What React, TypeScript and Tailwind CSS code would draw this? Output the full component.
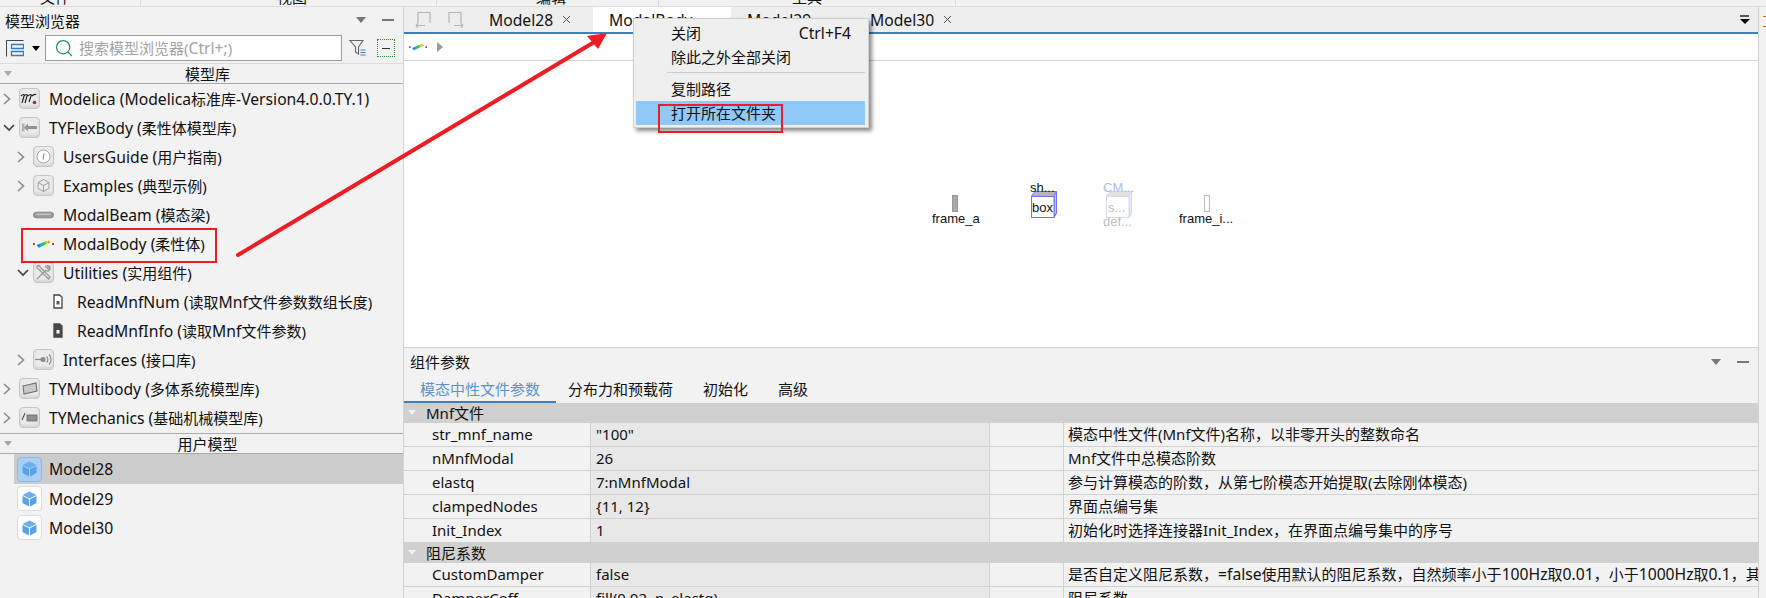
import type { ReactNode } from 'react'
import { Search } from 'lucide-react'

// latin text runs a little wider than the CJK next to it in the reference
function L({ children }: { children: ReactNode }) {
  return <span className="text-[15.7px]">{children}</span>
}

function Chevron({ open }: { open?: boolean }) {
  if (open) {
    return (
      <svg width="12" height="8" viewBox="0 0 12 8" fill="none" stroke="#444" strokeWidth="1.7">
        <path d="M1 1l5 5 5-5" />
      </svg>
    )
  }
  return (
    <svg width="8" height="12" viewBox="0 0 8 12" fill="none" stroke="#8a8a8a" strokeWidth="1.6">
      <path d="M1 1l5.5 5L1 11" />
    </svg>
  )
}

function IconBox({ children }: { children: ReactNode }) {
  return (
    <div className="w-[21px] h-[21px] rounded-[4px] border border-[#c6c6c6] bg-[#ebebeb] flex items-center justify-center shadow-[inset_0_-2px_3px_#d4d4d4]">
      {children}
    </div>
  )
}

function ModelicaIcon() {
  return (
    <IconBox>
      <svg width="19" height="15" viewBox="0 0 19 15" fill="none" stroke="#222" strokeWidth="1.2">
        <path d="M1 5c2-2 4-2 3 0l-2 7M4 5c2-2 4-2 3 0l-2 7M8 5c2-2 4-2 3 0l-2 6M12 5c2-2 4-2 4-1" />
        <circle cx="14.5" cy="11.5" r="1.8" fill="#d01c24" stroke="none" />
      </svg>
    </IconBox>
  )
}

function FlexIcon() {
  return (
    <IconBox>
      <svg width="17" height="13" viewBox="0 0 17 13" fill="#939393">
        <path d="M3 6.500L7 2.500v2.500h9v3H7v2.500z" />
        <rect x="1" y="2.500" width="2.500" height="8" fill="#b0b0b0" />
      </svg>
    </IconBox>
  )
}

function GuideIcon() {
  return (
    <IconBox>
      <svg width="15" height="15" viewBox="0 0 15 15" fill="#fff" stroke="#a6a6a6" strokeWidth="1">
        <circle cx="7.500" cy="7.500" r="6.500" />
        <path d="M8 4.500L7 10.500" stroke="#8d8d8d" strokeWidth="1.200" />
      </svg>
    </IconBox>
  )
}

function ExamplesIcon() {
  return (
    <IconBox>
      <svg width="15" height="15" viewBox="0 0 15 15" fill="none" stroke="#9d9d9d" strokeWidth="1">
        <path d="M7.500 1.500l5.500 3v6l-5.500 3-5.500-3v-6zM2 4.500l5.500 3 5.500-3M7.500 7.500v6" />
      </svg>
    </IconBox>
  )
}

function BeamIcon() {
  return (
    <svg width="22" height="8" viewBox="0 0 22 8">
      <rect x="0.5" y="1" width="21" height="6" rx="3" fill="#9b9b9b" stroke="#777" strokeWidth="0.8" />
      <rect x="3" y="2.500" width="16" height="1.500" fill="#c4c4c4" />
    </svg>
  )
}

function RainbowBar({ width = 22, id }: { width?: number; id: string }) {
  return (
    <svg width={width} height={(width * 10) / 22} viewBox="0 0 22 10">
      <defs>
        <linearGradient id={id} x1="0" x2="1" y1="0" y2="0">
          <stop offset="0" stopColor="#2040e0" />
          <stop offset="0.3" stopColor="#10b8d0" />
          <stop offset="0.55" stopColor="#30d030" />
          <stop offset="0.8" stopColor="#e8e020" />
          <stop offset="1" stopColor="#e03020" />
        </linearGradient>
      </defs>
      <rect x="0" y="4" width="2" height="2" fill="#555" />
      <rect x="20" y="4" width="2" height="2" fill="#555" />
      <path d="M4 6L16 1l2 2.500L6 9z" fill={`url(#${id})`} />
    </svg>
  )
}

function ToolsIcon() {
  return (
    <IconBox>
      <svg width="17" height="17" viewBox="0 0 17 17" fill="none" stroke="#9a9a9a" strokeWidth="1.300">
        <path d="M2 15L11 6M10 3.500a3 3 0 0 1 4-1.500l-2 2 1 1 2-2a3 3 0 0 1-4.500 3.500" />
        <path d="M2 2l2-.5 1.500 2L15 13l-1.500 2L4 5.500 2 4z" />
      </svg>
    </IconBox>
  )
}

function DocIcon({ filled }: { filled?: boolean }) {
  return (
    <svg width="10" height="15" viewBox="0 0 10 15">
      <path d="M1 1h5.500L9 3v11H1z" fill={filled ? '#4a4a4a' : '#fff'} stroke="#444" strokeWidth="1.300" />
      <rect x="3.500" y="7" width="3" height="3.500" fill={filled ? '#fff' : '#555'} />
    </svg>
  )
}

function InterfacesIcon() {
  return (
    <IconBox>
      <svg width="19" height="13" viewBox="0 0 19 13" fill="none" stroke="#8c8c8c" strokeWidth="1.200">
        <path d="M1 6.500h6" />
        <circle cx="9" cy="6.500" r="2" fill="#8c8c8c" />
        <path d="M12.500 3.500a4 4 0 0 1 0 6M15 1.500a7 7 0 0 1 0 10" />
      </svg>
    </IconBox>
  )
}

function MultibodyIcon() {
  return (
    <IconBox>
      <svg width="17" height="15" viewBox="0 0 17 15">
        <path d="M2 5l13-3 1 8-13 3z" fill="#c9c9c9" stroke="#707070" strokeWidth="1.100" />
      </svg>
    </IconBox>
  )
}

function MechanicsIcon() {
  return (
    <IconBox>
      <svg width="18" height="13" viewBox="0 0 18 13">
        <path d="M1 9L4 2" stroke="#555" strokeWidth="1.200" />
        <rect x="6" y="4" width="10" height="6" fill="#8f8f8f" stroke="#666" strokeWidth="0.800" />
      </svg>
    </IconBox>
  )
}

function CubeIcon({ selected }: { selected?: boolean }) {
  return (
    <div
      className={
        selected
          ? 'w-[25px] h-[25px] rounded-[4px] border border-[#8dbce8] bg-[#a8d0f4] flex items-center justify-center'
          : 'w-[25px] h-[25px] rounded-[4px] border border-[#dcdcdc] bg-white flex items-center justify-center'
      }
    >
      <svg width="15" height="16" viewBox="0 0 15 16">
        <path d="M7.500 0.500L14.500 4 7.500 7.500 0.500 4z" fill="#6aaef0" />
        <path d="M0.500 5l6.500 3.300v7.200L0.500 12z" fill="#5b9fe4" />
        <path d="M14.500 5L8 8.300v7.200l6.500-3.500z" fill="#5b9fe4" />
      </svg>
    </div>
  )
}

function TreeRow({
  depth,
  arrow,
  icon,
  children
}: {
  depth: number
  arrow?: 'open' | 'closed'
  icon: ReactNode
  children: ReactNode
}) {
  const pad = depth === 0 ? 'pl-[3px]' : depth === 1 ? 'pl-[17px]' : 'pl-[31px]'
  return (
    <div className={'h-[29px] flex items-center whitespace-nowrap overflow-hidden ' + pad}>
      <div className="w-[16px] flex items-center">
        {arrow === 'open' && <Chevron open />}
        {arrow === 'closed' && <Chevron />}
      </div>
      <div className="w-[21px] flex items-center justify-center shrink-0">{icon}</div>
      <span className="ml-[9px]">{children}</span>
    </div>
  )
}

function SectionBar({ title }: { title: string }) {
  return (
    <div className="relative h-[20px] flex items-center justify-center border-b border-[#aaaaaa] pl-[12px]">
      <span className="absolute left-[4px] top-[7px] w-0 h-0 border-x-[4px] border-x-transparent border-t-[5px] border-t-[#a8a8a8]" />
      {title}
    </div>
  )
}

function ModelRow({ name, selected }: { name: string; selected?: boolean }) {
  return (
    <div className={selected ? 'ml-[14px] h-[30px] bg-[#cccccc] flex items-center' : 'ml-[14px] h-[29px] flex items-center'}>
      <div className="ml-[3px]">
        <CubeIcon selected={selected} />
      </div>
      <span className="ml-[7px]">
        <L>{name}</L>
      </span>
    </div>
  )
}

function ModelBrowser() {
  return (
    <aside className="w-[404px] shrink-0 border-r border-[#d4d4d4] bg-[#f2f2f2]">
      <div className="h-[26px] flex items-center pl-[5px] pr-[9px]">
        <span className="flex-1 pt-[1px]">模型浏览器</span>
        <span className="w-0 h-0 border-x-[5px] border-x-transparent border-t-[6px] border-t-[#777] mr-[16px]" />
        <span className="w-[12px] h-[2px] bg-[#777]" />
      </div>
      <div className="h-[30px] flex items-center pl-[6px]">
        <svg width="18" height="17" viewBox="0 0 18 17" fill="none">
          <path d="M.5 16.500V.5h17" stroke="#444" />
          <path d="M5.500 4.500h12v4h-12zM5.500 11.500h12v4h-12z" stroke="#2f7fc4" strokeWidth="1.300" />
        </svg>
        <span className="ml-[8px] w-0 h-0 border-x-[4.500px] border-x-transparent border-t-[5px] border-t-black" />
        <div className="ml-[5px] w-[297px] h-[26px] border border-[#9c9c9c] bg-white flex items-center pl-[8px]">
          <Search size={20} strokeWidth={1.500} className="text-[#1d9060] shrink-0" />
          <span className="ml-[5px] text-[#a3a3a3] whitespace-nowrap">
            搜索模型浏览器(<L>Ctrl+;</L>)
          </span>
        </div>
        <svg className="ml-[7px]" width="18" height="18" viewBox="0 0 18 18" fill="none" stroke="#666" strokeWidth="1.100">
          <path d="M1 1.500h13L9.500 8v7l-3-2V8z" />
          <path d="M11.500 11h5M11.500 13.500h5M11.500 16h5" stroke="#2f7fc4" />
        </svg>
        <div className="ml-[10px] w-[18px] h-[18px] border border-dotted border-[#2a8a3a] flex items-center justify-center">
          <span className="w-[8px] h-[1px] bg-[#333]" />
        </div>
      </div>
      <div className="border-t border-[#dcdcdc]">
        <SectionBar title="模型库" />
      </div>
      <TreeRow depth={0} arrow="closed" icon={<ModelicaIcon />}>
        <L>Modelica (Modelica</L>标准库<L>-Version4.0.0.TY.1)</L>
      </TreeRow>
      <TreeRow depth={0} arrow="open" icon={<FlexIcon />}>
        <L>TYFlexBody (</L>柔性体模型库)
      </TreeRow>
      <TreeRow depth={1} arrow="closed" icon={<GuideIcon />}>
        <L>UsersGuide (</L>用户指南)
      </TreeRow>
      <TreeRow depth={1} arrow="closed" icon={<ExamplesIcon />}>
        <L>Examples (</L>典型示例)
      </TreeRow>
      <TreeRow depth={1} icon={<BeamIcon />}>
        <L>ModalBeam (</L>模态梁)
      </TreeRow>
      <TreeRow depth={1} icon={<RainbowBar id="rb-tree" />}>
        <L>ModalBody (</L>柔性体)
      </TreeRow>
      <TreeRow depth={1} arrow="open" icon={<ToolsIcon />}>
        <L>Utilities (</L>实用组件)
      </TreeRow>
      <TreeRow depth={2} icon={<DocIcon />}>
        <L>ReadMnfNum (</L>读取<L>Mnf</L>文件参数数组长度)
      </TreeRow>
      <TreeRow depth={2} icon={<DocIcon filled />}>
        <L>ReadMnfInfo (</L>读取<L>Mnf</L>文件参数)
      </TreeRow>
      <TreeRow depth={1} arrow="closed" icon={<InterfacesIcon />}>
        <L>Interfaces (</L>接口库)
      </TreeRow>
      <TreeRow depth={0} arrow="closed" icon={<MultibodyIcon />}>
        <L>TYMultibody (</L>多体系统模型库)
      </TreeRow>
      <TreeRow depth={0} arrow="closed" icon={<MechanicsIcon />}>
        <L>TYMechanics (</L>基础机械模型库)
      </TreeRow>
      <div className="border-t border-[#aaaaaa] mt-[1px]">
        <SectionBar title="用户模型" />
      </div>
      <ModelRow name="Model28" selected />
      <ModelRow name="Model29" />
      <ModelRow name="Model30" />
    </aside>
  )
}

function Close() {
  return (
    <svg width="9" height="9" viewBox="0 0 9 9" stroke="#555" strokeWidth="1">
      <path d="M1 1l7 7M8 1L1 8" />
    </svg>
  )
}

function TabBar() {
  return (
    <div className="h-[27px] shrink-0 bg-[#eeeeee] border-b-[2px] border-[#3d80bd] flex items-stretch">
      <div className="w-[85px] flex items-center pl-[11px] gap-[15px]">
        <svg width="17" height="17" viewBox="0 0 17 17" fill="none" stroke="#b5b5b5" strokeWidth="1.200">
          <path d="M3 12V1.500h12V12M1 14.500h9M1 14.500l2-2M1 14.500l2 2" />
        </svg>
        <svg width="17" height="17" viewBox="0 0 17 17" fill="none" stroke="#b5b5b5" strokeWidth="1.200">
          <path d="M2 12V1.500h12V12M7 14.500h9M16 14.500l-2-2M16 14.500l-2 2" />
        </svg>
      </div>
      <div className="w-[104px] flex items-center gap-[9px]">
        <L>Model28</L>
        <Close />
      </div>
      <div className="w-[138px] bg-white flex items-center pl-[16px] -mb-[2px] border-b-[2px] border-[#3d80bd]">
        <L>ModalBody</L>
      </div>
      <div className="w-[139px] flex items-center pl-[16px]">
        <L>Model29</L>
      </div>
      <div className="flex-1 flex items-center gap-[9px]">
        <L>Model30</L>
        <Close />
      </div>
      <div className="w-[27px] flex flex-col items-center justify-center gap-[2px]">
        <span className="w-[9px] h-[2px] bg-[#555]" />
        <span className="w-0 h-0 border-x-[5px] border-x-transparent border-t-[5px] border-t-black" />
      </div>
    </div>
  )
}

function CanvasNode({ className, children }: { className: string; children: ReactNode }) {
  return <div className={'absolute whitespace-nowrap font-["Liberation_Sans",sans-serif] text-[13px] leading-[16px] ' + className}>{children}</div>
}

function DiagramCanvas() {
  return (
    <div className="relative flex-1 bg-white">
      <div className="absolute left-[548px] top-[134px] w-[6px] h-[17px] bg-[#aaaaaa] border border-[#999]" />
      <CanvasNode className="left-[528px] top-[150px]">frame_a</CanvasNode>

      <div className="absolute left-[627px] top-[130px] w-[26px] h-[27px]">
        <svg width="26" height="27" viewBox="0 0 26 27" className="absolute inset-0">
          <path d="M.5 5L4 .5h21.500V22L23 26.500H.5z" fill="#b5b5b5" stroke="#6f6ff0" />
          <path d="M23 5L25.500 .5V22L23 26.500z" fill="#c4c4ee" stroke="#6f6ff0" />
          <rect x=".5" y="5.500" width="22.500" height="21" fill="#fff" stroke="#6f6ff0" />
        </svg>
        <span className="absolute left-[1px] top-[9px] font-['Liberation_Sans',sans-serif] text-[13px] leading-[16px]">box</span>
      </div>
      <CanvasNode className="left-[626px] top-[119px]">sh...</CanvasNode>

      <div className="absolute left-[702px] top-[130px] w-[26px] h-[27px]">
        <svg width="26" height="27" viewBox="0 0 26 27" className="absolute inset-0">
          <path d="M.5 5L4 .5h21.500V22L23 26.500H.5z" fill="#e2e2e2" stroke="#d6d6f8" />
          <path d="M23 5L25.500 .5V22L23 26.500z" fill="#ebebfa" stroke="#d6d6f8" />
          <rect x=".5" y="5.500" width="22.500" height="21" fill="#fff" stroke="#d6d6f8" />
        </svg>
        <span className="absolute left-[2px] top-[9px] font-['Liberation_Sans',sans-serif] text-[13px] leading-[16px] text-[#bdbdbd]">s...</span>
      </div>
      <CanvasNode className="left-[699px] top-[119px] text-[#b4b4f5]">CM...</CanvasNode>
      <CanvasNode className="left-[699px] top-[153px] text-[#bdbdbd]">def...</CanvasNode>

      <div className="absolute left-[800px] top-[134px] w-[6px] h-[17px] bg-white border border-[#bbbbbb]" />
      <CanvasNode className="left-[775px] top-[150px]">frame_i...</CanvasNode>
    </div>
  )
}

function ParamSection({ title }: { title: string }) {
  return (
    <div className="relative h-[20px] bg-[#d0d0d0] flex items-center pl-[22px]">
      <span className="absolute left-[4px] top-[7px] w-0 h-0 border-x-[4px] border-x-transparent border-t-[5px] border-t-[#f2f2f2]" />
      {title}
    </div>
  )
}

function ParamRow({ name, value, desc }: { name: string; value: string; desc: ReactNode }) {
  return (
    <div className="h-[24px] grid grid-cols-[187px_398px_75px_1fr] border-b-[1.500px] border-[#d2d2d2] whitespace-nowrap">
      <div className="pl-[28px] border-r-[1.500px] border-[#d2d2d2] leading-[22px]">{name}</div>
      <div className="pl-[5px] bg-[#e8e8e8] leading-[22px]">{value}</div>
      <div className="border-x-[1.500px] border-[#d2d2d2]" />
      <div className="pl-[4px] overflow-hidden leading-[22px]">{desc}</div>
    </div>
  )
}

function ParamPanel() {
  return (
    <div className="h-[251px] shrink-0 border-t-[1.500px] border-[#d2d2d2] bg-[#f2f2f2] overflow-hidden">
      <div className="h-[28px] flex items-center pl-[6px] pr-[9px]">
        <span className="flex-1">组件参数</span>
        <span className="w-0 h-0 border-x-[5px] border-x-transparent border-t-[6px] border-t-[#777] mr-[16px]" />
        <span className="w-[12px] h-[2px] bg-[#777]" />
      </div>
      <div className="h-[27px] flex items-stretch">
        <div className="w-[152px] flex items-center justify-center text-[#5b94cc] border-b-[2px] border-[#3d80bd]">模态中性文件参数</div>
        <div className="ml-[12px] flex items-center border-b-[2px] border-transparent">分布力和预载荷</div>
        <div className="ml-[30px] flex items-center border-b-[2px] border-transparent">初始化</div>
        <div className="ml-[30px] flex items-center border-b-[2px] border-transparent">高级</div>
      </div>
      <ParamSection title="Mnf文件" />
      <ParamRow name="str_mnf_name" value={'"100"'} desc="模态中性文件(Mnf文件)名称，以非零开头的整数命名" />
      <ParamRow name="nMnfModal" value="26" desc="Mnf文件中总模态阶数" />
      <ParamRow name="elastq" value="7:nMnfModal" desc="参与计算模态的阶数，从第七阶模态开始提取(去除刚体模态)" />
      <ParamRow name="clampedNodes" value="{11, 12}" desc="界面点编号集" />
      <ParamRow name="Init_Index" value="1" desc="初始化时选择连接器Init_Index，在界面点编号集中的序号" />
      <ParamSection title="阻尼系数" />
      <ParamRow
        name="CustomDamper"
        value="false"
        desc={
          <>
            是否自定义阻尼系数，<L>=false</L>使用默认的阻尼系数，自然频率小于<L>100Hz</L>取<L>0.01</L>，小于<L>1000Hz</L>取<L>0.1</L>，其余取1
          </>
        }
      />
      <ParamRow name="DamperCoff" value="fill(0.02, n_elastq)" desc="阻尼系数" />
    </div>
  )
}

function ContextMenu() {
  return (
    <div className="absolute left-[633px] top-[18px] w-[236px] h-[110px] bg-[#efefef] border-[1.500px] border-[#d0d0d0] shadow-[3px_3px_4px_rgba(0,0,0,0.45)] pl-[2px] pr-[3px]">
      <div className="h-[27px] pl-[35px] flex items-center justify-between pr-[14px]">
        <span>关闭</span>
        <L>Ctrl+F4</L>
      </div>
      <div className="h-[21px] pl-[35px] flex items-center">除此之外全部关闭</div>
      <div className="ml-[31px] h-[1px] mt-[5px] bg-[#cdcdcd]" />
      <div className="h-[24px] mt-[4px] pl-[35px] flex items-center">复制路径</div>
      <div className="h-[24px] pl-[35px] flex items-center bg-[#90c8f6]">打开所在文件夹</div>
    </div>
  )
}

export default function App() {
  return (
    <div className="relative w-[1766px] h-[598px] overflow-hidden bg-[#f2f2f2] text-[15px] leading-[20px] text-[#111] font-['Noto_Sans','Noto_Sans_CJK_SC',sans-serif]">
      {/* cut off menu bar */}
      <div className="h-[7px] overflow-hidden border-b border-[#dcdcdc] flex">
        <span className="ml-[40px] w-[100px] -mt-[13px]">文件</span>
        <span className="w-[137px] border-l border-[#dcdcdc]" />
        <span className="w-[159px] -mt-[13px]">视图</span>
        <span className="w-[100px] border-l border-[#dcdcdc]" />
        <span className="w-[122px] -mt-[13px]">编辑</span>
        <span className="w-[134px] border-l border-[#dcdcdc]" />
        <span className="w-[163px] -mt-[13px]">工具</span>
        <span className="border-l border-[#dcdcdc]" />
      </div>

      <div className="flex h-[591px]">
        <ModelBrowser />
        <main className="flex-1 min-w-0 flex flex-col">
          <TabBar />
          <div className="h-[27px] shrink-0 bg-white border-b-[1.500px] border-[#d2d2d2] flex items-center pl-[5px]">
            <RainbowBar width={18} id="rb-crumb" />
            <span className="ml-[10px] w-0 h-0 border-y-[5px] border-y-transparent border-l-[6px] border-l-[#9a9a9a]" />
          </div>
          <DiagramCanvas />
          <ParamPanel />
        </main>
        <div className="relative w-[8px] shrink-0 border-l-[1.500px] border-[#d2d2d2]">
          <span className="absolute left-[4px] top-[9px] w-[3px] h-[1px] bg-[#d07020]" />
          <span className="absolute left-[4px] top-[19px] w-[3px] h-[1px] bg-[#d07020]" />
        </div>
      </div>

      <ContextMenu />

      {/* red annotations on the screenshot */}
      <div className="absolute left-[21px] top-[228px] w-[196px] h-[35px] border-[2px] border-[#ee1c25]" />
      <div className="absolute left-[658px] top-[104px] w-[125px] h-[29px] border-[2px] border-[#ee1c25]" />
      <svg className="absolute left-0 top-0 pointer-events-none" width="1766" height="598">
        <path d="M238 255L596 41" stroke="#ee1c25" strokeWidth="4" strokeLinecap="round" />
        <path d="M607 33L587 36L598 49z" fill="#ee1c25" />
      </svg>
    </div>
  )
}
